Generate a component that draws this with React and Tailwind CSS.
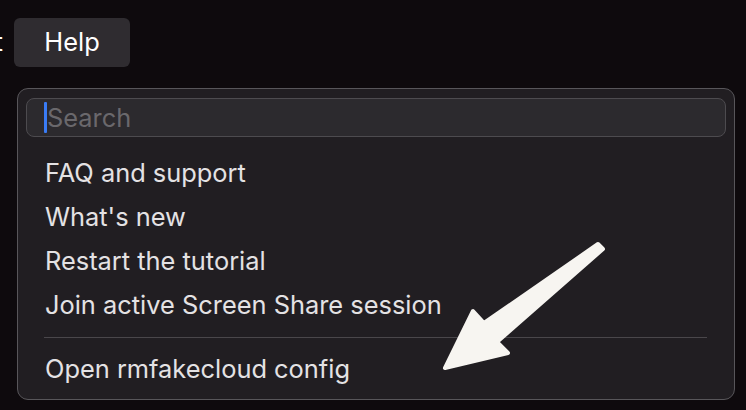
import React from 'react';

const items = [
  'FAQ and support',
  "What's new",
  'Restart the tutorial',
  'Join active Screen Share session',
];

const Arrow = () => (
  <svg
    className="absolute inset-0 pointer-events-none"
    width="746"
    height="410"
    viewBox="0 0 746 410"
  >
    <polygon
      points="598,244 484,323 473,311 445,368 508,353 497,342 603,249"
      fill="#f7f5f1"
      stroke="#f7f5f1"
      strokeWidth="4"
      strokeLinejoin="round"
    />
  </svg>
);

const App = () => {
  return (
    <div
      className="relative w-[746px] h-[410px] overflow-hidden bg-[#0e0a0d] text-[#e4e2e4]"
      style={{ fontFamily: 'Inter, "Noto Sans", sans-serif' }}
    >
      {/* Top: menu bar fragment */}
      <div className="flex items-center pt-[18px]">
        <span className="w-[3px] flex justify-end text-[25px] leading-none text-white">t</span>
        <div className="ml-[11px] w-[116px] h-[49px] rounded-[6px] bg-[#2f2c30] flex items-center justify-center text-[25.4px] text-white">
          Help
        </div>
      </div>

      {/* Dropdown */}
      <div className="ml-[17px] mt-[21px] w-[718px] h-[312px] rounded-[11px] border-[1.5px] border-[#58565a] bg-[#211e22] px-[8px] pt-[9px]">
        <div className="h-[39px] rounded-[8px] border border-[#4d4b4f] bg-[#2c2a2e] flex items-center pl-[17px]">
          <span className="w-[3px] h-[31px] rounded-[1px] bg-[#3a7cf6]" />
          <span className="text-[25.4px] leading-none text-[#6a686c]">Search</span>
        </div>

        <div className="mt-[14px] px-[19px]">
          {items.map((t) => (
            <div key={t} className="h-[44px] leading-[44px] text-[25.4px] whitespace-nowrap">
              {t}
            </div>
          ))}
          <div className="mt-[10px] mb-[9px] h-px bg-[#4a474b] -ml-[1px]" />
          <div className="h-[44px] leading-[44px] text-[25.4px] whitespace-nowrap">
            Open rmfakecloud config
          </div>
        </div>
      </div>

      <Arrow />
    </div>
  );
};

export default App;
